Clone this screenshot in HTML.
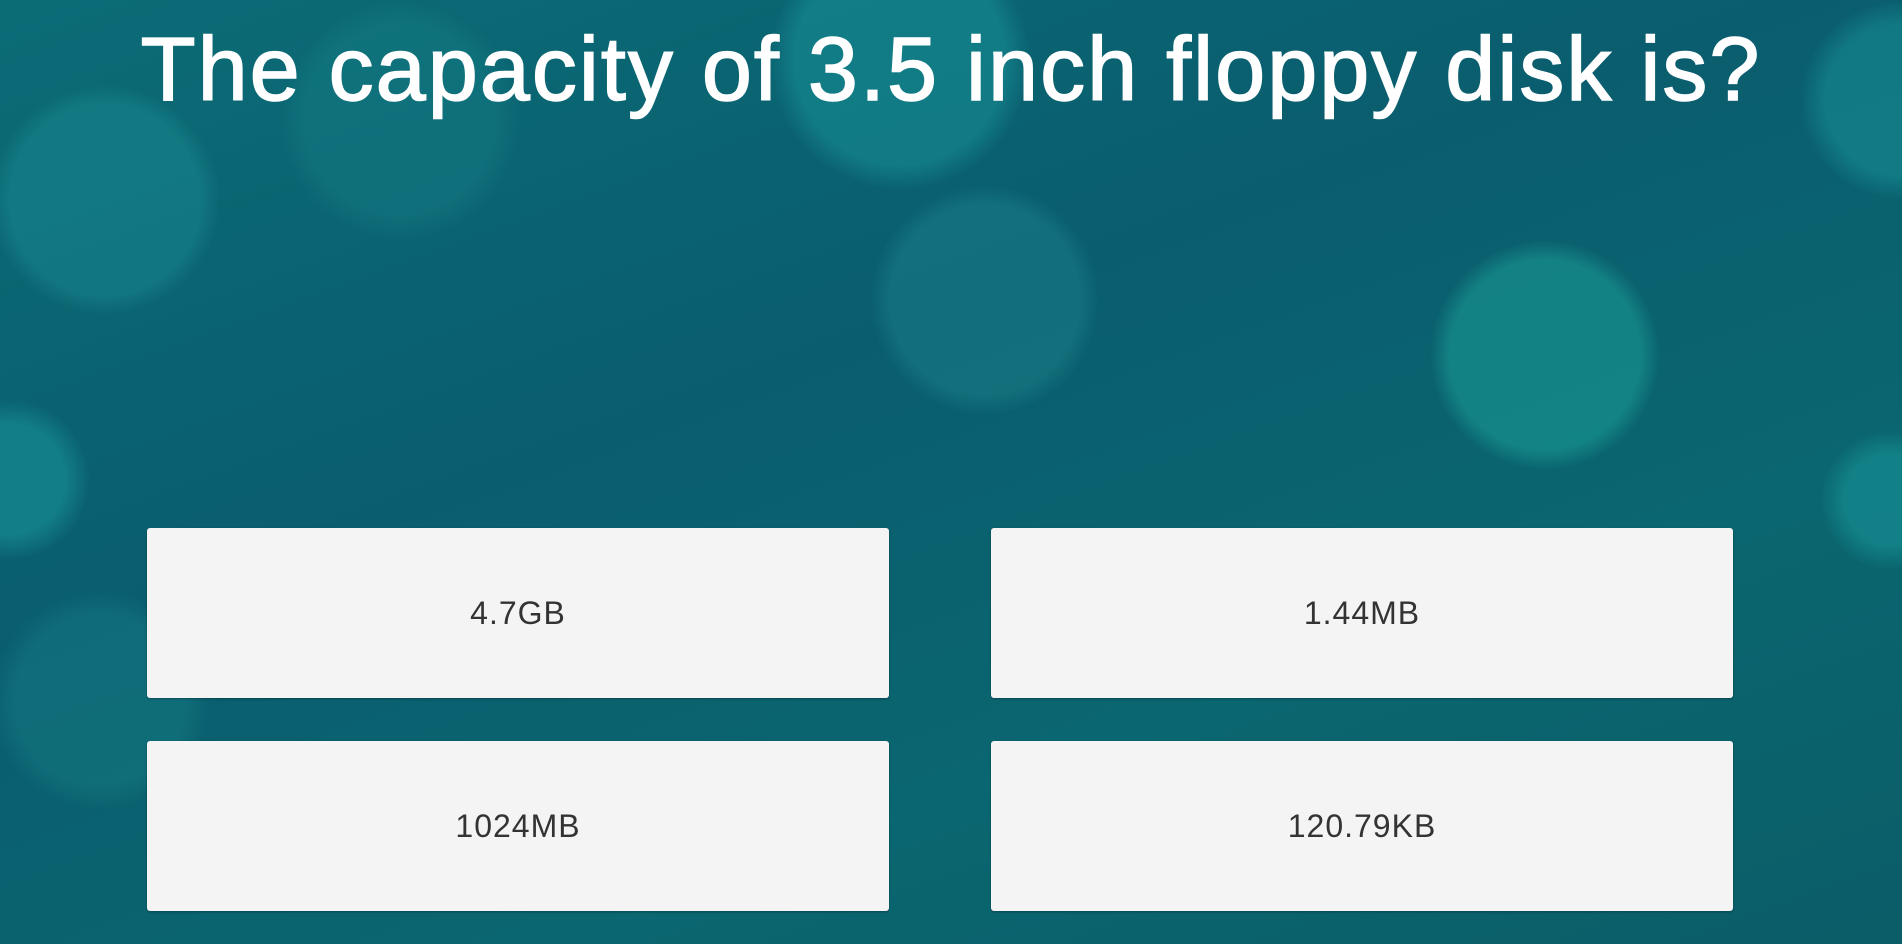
<!DOCTYPE html>
<html><head><meta charset="utf-8"><style>
html,body{margin:0;padding:0;width:1902px;height:944px;overflow:hidden}
body{position:relative;font-family:"Liberation Sans",sans-serif;
background:
radial-gradient(circle at 105px 200px,rgba(40,170,170,.25) 0,rgba(40,170,170,.25) 95px,transparent 115px),
radial-gradient(circle at 400px 120px,rgba(30,150,150,.22) 0,rgba(30,150,150,.22) 95px,transparent 120px),
radial-gradient(circle at 900px 60px,rgba(30,170,170,.35) 0,rgba(30,170,170,.35) 105px,transparent 130px),
radial-gradient(circle at 985px 300px,rgba(40,160,160,.25) 0,rgba(40,160,160,.25) 95px,transparent 115px),
radial-gradient(circle at 1545px 355px,rgba(30,170,160,.45) 0,rgba(30,170,160,.45) 95px,transparent 115px),
radial-gradient(circle at 1900px 100px,rgba(30,170,170,.35) 0,rgba(30,170,170,.35) 75px,transparent 100px),
radial-gradient(circle at 10px 480px,rgba(30,170,170,.4) 0,rgba(30,170,170,.4) 55px,transparent 80px),
radial-gradient(circle at 1890px 500px,rgba(30,170,170,.4) 0,rgba(30,170,170,.4) 45px,transparent 70px),
radial-gradient(circle at 100px 700px,rgba(30,150,150,.25) 0,rgba(30,150,150,.25) 85px,transparent 110px),
linear-gradient(160deg,#0b6c76 0%,#0a5d6e 40%,#0a6670 70%,#0b5d68 100%);}
h1{position:absolute;left:0;top:20px;width:1902px;margin:0;text-align:center;color:#fff;font-weight:normal;font-size:90px;line-height:100px;letter-spacing:2px;-webkit-text-stroke:1.5px #fff}
.b{position:absolute;width:742px;height:170px;background:#f4f4f4;border-radius:3px;display:flex;align-items:center;justify-content:center;font-size:32px;letter-spacing:1px;color:#333;box-shadow:0 1px 2px rgba(0,0,0,.3)}
</style></head><body>
<h1>The capacity of 3.5 inch floppy disk is?</h1>
<div class="b" style="left:147px;top:528px">4.7GB</div>
<div class="b" style="left:991px;top:528px">1.44MB</div>
<div class="b" style="left:147px;top:741px">1024MB</div>
<div class="b" style="left:991px;top:741px">120.79KB</div>
</body></html>
